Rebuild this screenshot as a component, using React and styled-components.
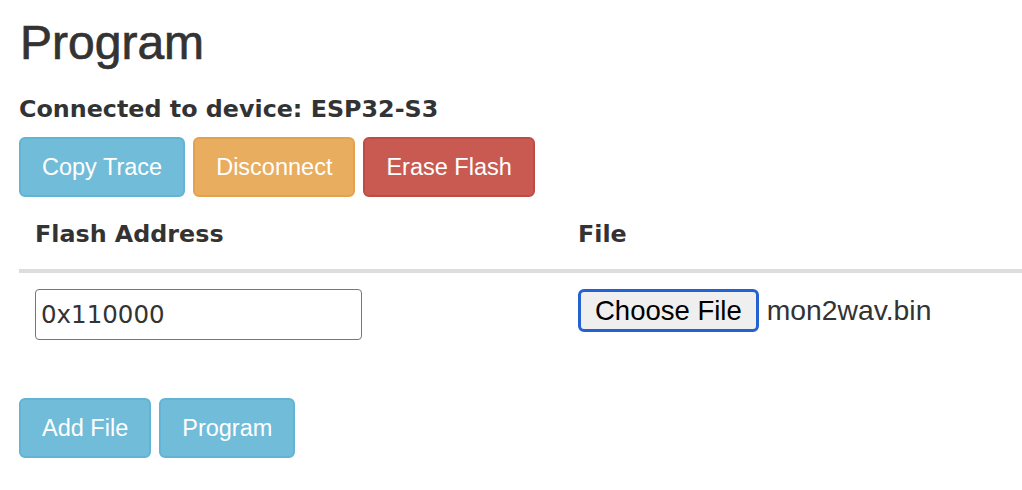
import React from "react";
import styled, { createGlobalStyle } from "styled-components";

const GlobalStyle = createGlobalStyle`
  html, body {
    margin: 0;
    padding: 0;
    background: #ffffff;
    overflow: hidden;
  }
  body {
    font-family: "Liberation Sans", Arial, Helvetica, sans-serif;
    color: #333333;
  }
  * { box-sizing: border-box; }
`;

const Page = styled.main`
  padding: 17px 0 0 19px;
`;

const Title = styled.h1`
  margin: 0 0 0 1px;
  font-family: "Liberation Sans", Arial, sans-serif;
  font-size: 48px;
  line-height: 52px;
  font-weight: 400;
  color: #333333;
  -webkit-text-stroke: 0.7px #333333;
`;

const Status = styled.h4`
  margin: 25px 0 0;
  font-family: "DejaVu Sans", "Liberation Sans", sans-serif;
  font-size: 23.8px;
  line-height: 30px;
  font-weight: 700;
  color: #333333;
`;

const ButtonRow = styled.div`
  display: flex;
  gap: 8px;
  margin-top: ${(p) => p.$top}px;
`;

const tones = {
  info: { bg: "#71bcd9", border: "#62b3d4" },
  warning: { bg: "#e8ad5e", border: "#e2a24f" },
  danger: { bg: "#c95a52", border: "#bd4c45" },
};

const Button = styled.button`
  height: 60px;
  padding: 0 21px;
  border: 2px solid ${(p) => tones[p.$tone].border};
  border-radius: 6px;
  background: ${(p) => tones[p.$tone].bg};
  color: #ffffff;
  font-family: "Liberation Sans", Arial, sans-serif;
  font-size: 23.5px;
  line-height: 1;
  padding-top: 2px;
  cursor: pointer;
`;

const Table = styled.table`
  margin-top: 6px;
  width: 100%;
  border-collapse: collapse;
`;

const HeadCell = styled.th`
  text-align: left;
  padding: 14px 16px 17px;
  border-bottom: 4px solid #dddddd;
  font-family: "DejaVu Sans", "Liberation Sans", sans-serif;
  font-size: 23.8px;
  line-height: 35px;
  font-weight: 700;
  color: #333333;
  width: ${(p) => (p.$w ? `${p.$w}px` : "auto")};
`;

const Cell = styled.td`
  padding: 16px 16px 14px;
  vertical-align: top;
`;

const AddressInput = styled.input`
  display: block;
  width: 327px;
  height: 51px;
  padding: 0 5px;
  border: 1.5px solid #767676;
  border-radius: 4px;
  background: #ffffff;
  font-family: "DejaVu Sans", "Liberation Sans", sans-serif;
  font-size: 24.5px;
  color: #333333;
  outline: none;
`;

const FilePicker = styled.label`
  display: inline-flex;
  align-items: baseline;
  gap: 8px;
  font-family: "Liberation Sans", Arial, sans-serif;
`;

const ChooseButton = styled.span`
  display: inline-block;
  height: 43px;
  padding: 3px 14px;
  border: 3px solid #2362d0;
  border-radius: 6px;
  background: #efefef;
  color: #000000;
  font-size: 27.5px;
  line-height: 31px;
`;

const FileName = styled.span`
  font-size: 28.3px;
  line-height: 31px;
  color: #333333;
`;

export default function App() {
  return (
    <>
      <GlobalStyle />
      <Page>
        <Title>Program</Title>
        <Status>Connected to device: ESP32-S3</Status>
        <ButtonRow $top={13}>
          <Button $tone="info">Copy Trace</Button>
          <Button $tone="warning">Disconnect</Button>
          <Button $tone="danger">Erase Flash</Button>
        </ButtonRow>
        <Table>
          <thead>
            <tr>
              <HeadCell $w={543}>Flash Address</HeadCell>
              <HeadCell>File</HeadCell>
            </tr>
          </thead>
          <tbody>
            <tr>
              <Cell>
                <AddressInput defaultValue="0x110000" />
              </Cell>
              <Cell>
                <FilePicker>
                  <ChooseButton>Choose File</ChooseButton>
                  <FileName>mon2wav.bin</FileName>
                </FilePicker>
              </Cell>
            </tr>
          </tbody>
        </Table>
        <ButtonRow $top={44}>
          <Button $tone="info">Add File</Button>
          <Button $tone="info">Program</Button>
        </ButtonRow>
      </Page>
    </>
  );
}
